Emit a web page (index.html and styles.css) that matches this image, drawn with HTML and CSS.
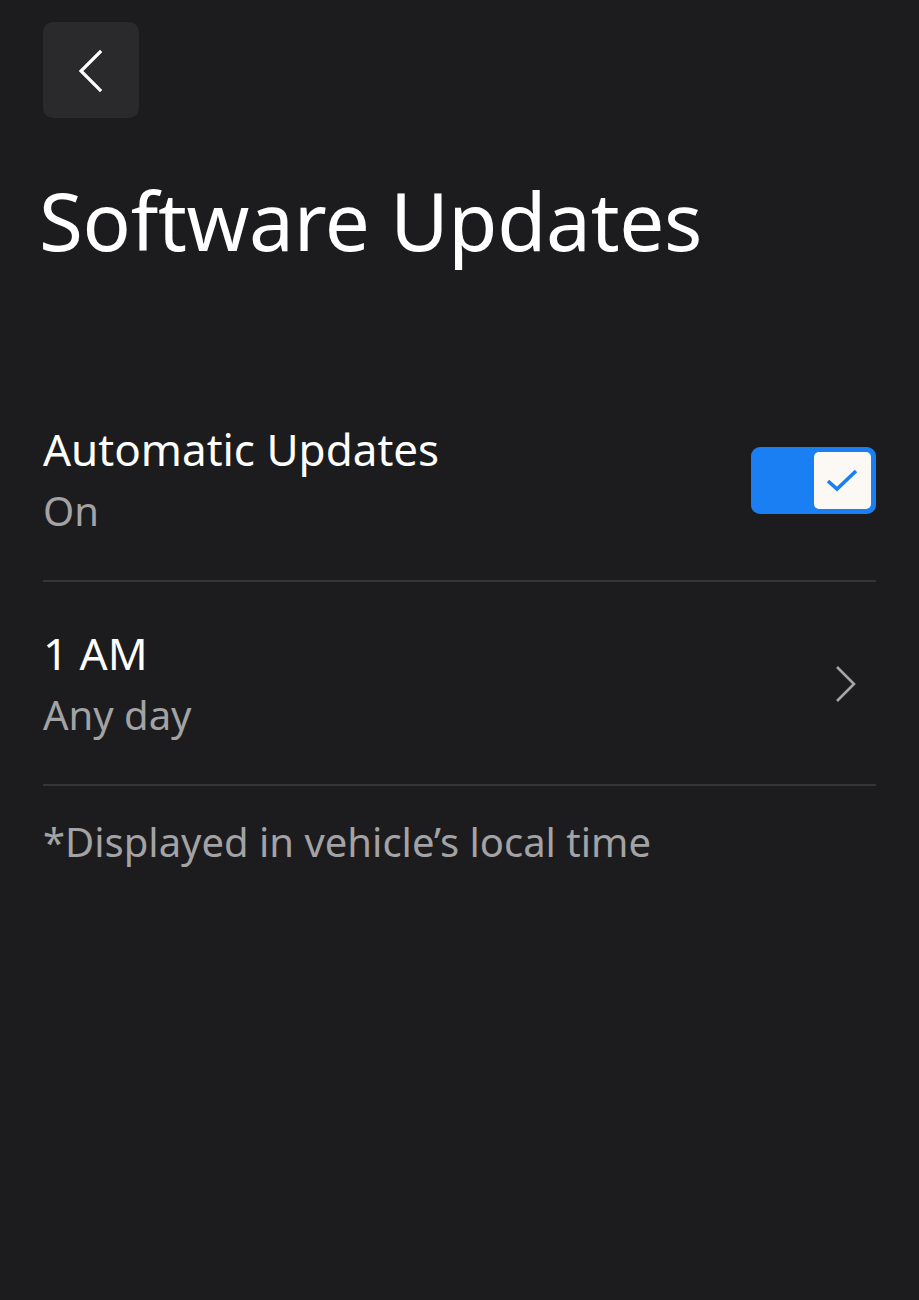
FILE: index.html
```html
<!DOCTYPE html>
<html lang="en">
<head>
<meta charset="utf-8">
<title>Software Updates</title>
<link rel="stylesheet" href="styles.css">
</head>
<body>
<div class="page">
  <button class="back" aria-label="Back">
    <svg width="40" height="48" viewBox="0 0 40 48"><path d="M28 6 L9 25 L28 44" fill="none" stroke="#fff" stroke-width="3.2" stroke-linecap="square"/></svg>
  </button>
  <h1 class="title">Software Updates</h1>
  <div class="list">
    <div class="row row-first">
      <div class="texts">
        <div class="label">Automatic Updates</div>
        <div class="sub">On</div>
      </div>
      <div class="toggle">
        <div class="knob">
          <svg width="34" height="26" viewBox="0 0 34 26"><path d="M2 13 L11 21 L30 3" fill="none" stroke="#1a7ff2" stroke-width="3.6"/></svg>
        </div>
      </div>
    </div>
    <div class="row row-second">
      <div class="texts">
        <div class="label">1 AM</div>
        <div class="sub">Any day</div>
      </div>
      <svg class="chev" width="30" height="40" viewBox="0 0 30 40"><path d="M5 3 L22 20 L5 37" fill="none" stroke="#a5a5a7" stroke-width="2.6"/></svg>
    </div>
  </div>
  <p class="note">*Displayed in vehicle’s local time</p>
</div>
</body>
</html>
```
FILE: styles.css
```css
html, body {
  margin: 0;
  padding: 0;
  background: #1c1c1e;
}
body {
  font-family: "Noto Sans", "Open Sans", sans-serif;
  color: #ffffff;
  min-height: 1300px;
}
.page {
  padding: 22px 43px 0 43px;
}
.back {
  width: 96px;
  height: 96px;
  border: none;
  border-radius: 10px;
  background: #2a2a2c;
  display: flex;
  align-items: center;
  justify-content: center;
  padding: 0 0 0 2px;
  cursor: pointer;
}
.back svg { display: block; }
.title {
  margin: 52px 0 0 -4px;
  font-size: 80px;
  font-weight: 400;
  line-height: 100px;
  letter-spacing: -0.3px;
}
.list {
  margin-top: 148px;
}
.row {
  display: flex;
  align-items: center;
  justify-content: space-between;
  border-bottom: 2px solid #353537;
}
.row-first {
  padding: 0 0 38px 0;
}
.row-second {
  padding: 40px 0 38px 0;
}
.texts { display: flex; flex-direction: column; }
.label {
  font-size: 44px;
  line-height: 62px;
}
.sub {
  font-size: 40px;
  line-height: 62px;
  color: #a3a3a5;
}
.toggle {
  width: 125px;
  height: 67px;
  border-radius: 9px;
  background: #1a7ff2;
  box-sizing: border-box;
  padding: 5px;
  display: flex;
  justify-content: flex-end;
  margin-top: 0;
}
.knob {
  width: 57px;
  height: 57px;
  border-radius: 5px;
  background: #fcf9f5;
  display: flex;
  align-items: center;
  justify-content: center;
}
.knob svg { display: block; margin-top: 2px; }
.chev { margin-right: 14px; display: block; }
.note {
  margin: 30px 0 0 0;
  font-size: 40px;
  line-height: 52px;
  color: #a3a3a5;
}
```
